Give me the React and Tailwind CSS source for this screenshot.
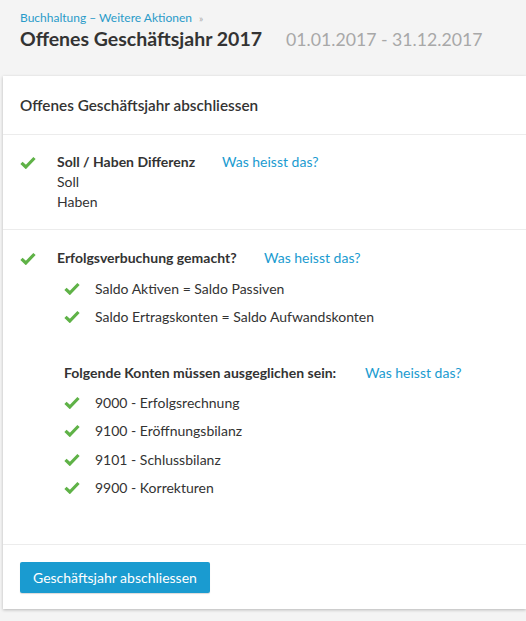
import React from "react";

function Check() {
  return (
    <svg width="16" height="13" viewBox="0 0 16 13" className="shrink-0">
      <path d="M1.5 6.8 L5.8 11 L14.5 2" fill="none" stroke="#5fb247" strokeWidth="3.2" strokeLinecap="butt" strokeLinejoin="miter" />
    </svg>
  );
}

function Link({ children, className = "" }) {
  return <a className={"text-[#1a9bd0] text-[14px] " + className}>{children}</a>;
}

function Item({ children }) {
  return (
    <div className="flex items-center h-[28.5px]">
      <div className="w-[31px] flex items-center"><Check /></div>
      <span className="text-[14px] text-[#333]">{children}</span>
    </div>
  );
}

export default function App() {
  return (
    <div className="min-h-[621px] bg-[#f4f4f4] pt-[9px] pb-[12px] font-['Lato','Liberation_Sans',sans-serif] text-[#333]">
      <div className="px-[20px]">
        <div className="text-[12px] leading-[18px] text-[#2a9bc9] whitespace-nowrap">
          Buchhaltung – Weitere Aktionen <span className="text-[#aaa] text-[10px] ml-[4px]">»</span>
        </div>
        <div className="flex items-baseline leading-[24px] whitespace-nowrap">
          <h1 className="text-[19.5px] font-bold text-[#333]">Offenes Geschäftsjahr 2017</h1>
          <span className="text-[17.7px] text-[#a8a8a8] ml-[24px]">01.01.2017 - 31.12.2017</span>
        </div>
      </div>
      <div className="mt-[24px] ml-[3px] bg-white shadow-[0_1px_3px_rgba(0,0,0,0.25)]">
        <div className="h-[59px] flex items-center px-[17px] border-b border-[#ececec]">
          <h2 className="text-[15.3px] font-semibold text-[#333]">Offenes Geschäftsjahr abschliessen</h2>
        </div>
        <div className="px-[17px] pt-[17px] pb-[17px] border-b border-[#ececec]">
          <div className="flex">
            <div className="w-[37px] pt-[4px]"><Check /></div>
            <div className="leading-[20px] text-[14px]">
              <div className="flex">
                <span className="font-bold w-[165px]">Soll / Haben Differenz</span>
                <Link>Was heisst das?</Link>
              </div>
              <div>Soll</div>
              <div>Haben</div>
            </div>
          </div>
        </div>
        <div className="px-[17px] pt-[18px] pb-[42px] border-b border-[#ececec]">
          <div className="flex">
            <div className="w-[37px] pt-[4px]"><Check /></div>
            <div className="text-[14px] flex-1">
              <div className="flex leading-[20px]">
                <span className="font-bold w-[207px]">Erfolgsverbuchung gemacht?</span>
                <Link>Was heisst das?</Link>
              </div>
              <div className="ml-[7px] mt-[6px]">
                <Item>Saldo Aktiven = Saldo Passiven</Item>
                <Item>Saldo Ertragskonten = Saldo Aufwandskonten</Item>
              </div>
              <div className="ml-[7px] mt-[32px]">
                <div className="flex leading-[20px] mb-[5px]">
                  <span className="font-bold w-[301px]">Folgende Konten müssen ausgeglichen sein:</span>
                  <Link>Was heisst das?</Link>
                </div>
                <Item>9000 - Erfolgsrechnung</Item>
                <Item>9100 - Eröffnungsbilanz</Item>
                <Item>9101 - Schlussbilanz</Item>
                <Item>9900 - Korrekturen</Item>
              </div>
            </div>
          </div>
        </div>
        <div className="px-[17px] pt-[17px] pb-[16px]">
          <button className="h-[31px] px-[13px] rounded-[2px] bg-[#1a9bd0] text-white text-[14px] shadow-[0_1px_1px_rgba(0,0,0,0.15)]">
            Geschäftsjahr abschliessen
          </button>
        </div>
      </div>
    </div>
  );
}
